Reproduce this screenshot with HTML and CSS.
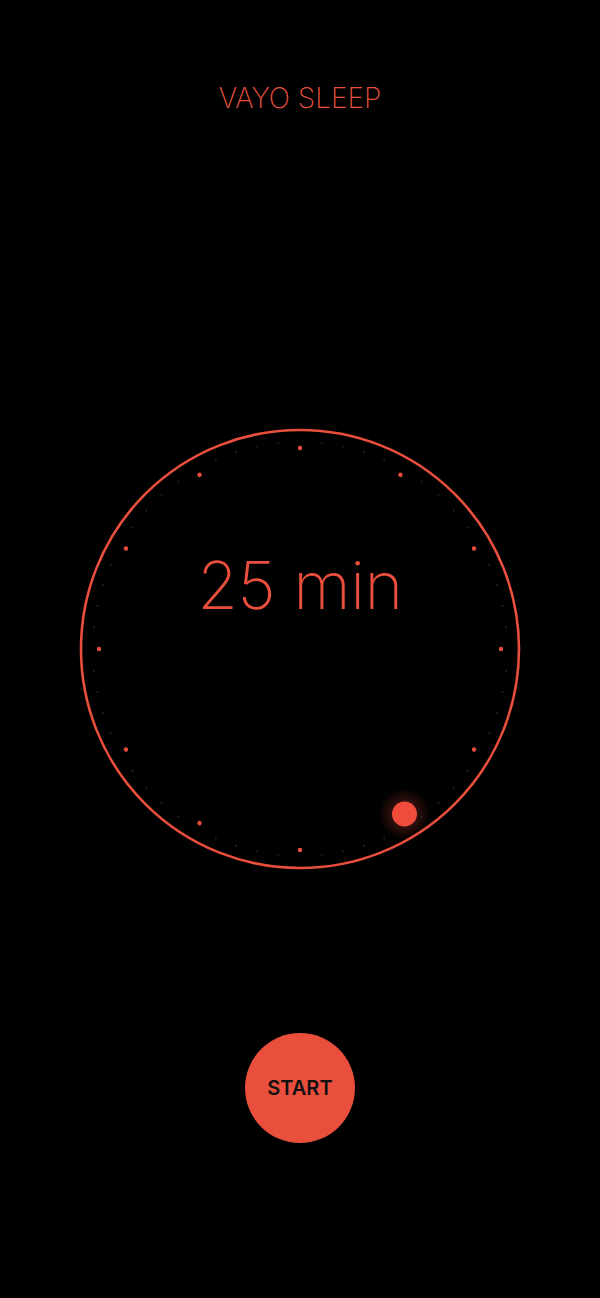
FILE: index.html
```html
<!DOCTYPE html>
<html>
<head>
<meta charset="utf-8">
<link rel="stylesheet" href="styles.css">
</head>
<body>
<div class="app">
  <header class="title">VAYO SLEEP</header>
  <div class="dial">
    <svg class="dial-svg" width="460" height="460" viewBox="0 0 460 460">
      <defs>
        <radialGradient id="glow">
          <stop offset="0" stop-color="#ff5a44" stop-opacity="0.55"/>
          <stop offset="0.5" stop-color="#ff5a44" stop-opacity="0.18"/>
          <stop offset="1" stop-color="#ff5a44" stop-opacity="0"/>
        </radialGradient>
      </defs>
      <circle cx="230" cy="230" r="219" fill="none" stroke="#ea4f3e" stroke-width="2.6"/>
      <g class="minor" fill="#242424">
        <circle cx="230" cy="23" r="1" transform="rotate(6 230 230)"/>
        <circle cx="230" cy="23" r="1" transform="rotate(12 230 230)"/>
        <circle cx="230" cy="23" r="1" transform="rotate(18 230 230)"/>
        <circle cx="230" cy="23" r="1" transform="rotate(24 230 230)"/>
        <circle cx="230" cy="23" r="1" transform="rotate(36 230 230)"/>
        <circle cx="230" cy="23" r="1" transform="rotate(42 230 230)"/>
        <circle cx="230" cy="23" r="1" transform="rotate(48 230 230)"/>
        <circle cx="230" cy="23" r="1" transform="rotate(54 230 230)"/>
        <circle cx="230" cy="23" r="1" transform="rotate(66 230 230)"/>
        <circle cx="230" cy="23" r="1" transform="rotate(72 230 230)"/>
        <circle cx="230" cy="23" r="1" transform="rotate(78 230 230)"/>
        <circle cx="230" cy="23" r="1" transform="rotate(84 230 230)"/>
        <circle cx="230" cy="23" r="1" transform="rotate(96 230 230)"/>
        <circle cx="230" cy="23" r="1" transform="rotate(102 230 230)"/>
        <circle cx="230" cy="23" r="1" transform="rotate(108 230 230)"/>
        <circle cx="230" cy="23" r="1" transform="rotate(114 230 230)"/>
        <circle cx="230" cy="23" r="1" transform="rotate(126 230 230)"/>
        <circle cx="230" cy="23" r="1" transform="rotate(132 230 230)"/>
        <circle cx="230" cy="23" r="1" transform="rotate(138 230 230)"/>
        <circle cx="230" cy="23" r="1" transform="rotate(144 230 230)"/>
        <circle cx="230" cy="23" r="1" transform="rotate(156 230 230)"/>
        <circle cx="230" cy="23" r="1" transform="rotate(162 230 230)"/>
        <circle cx="230" cy="23" r="1" transform="rotate(168 230 230)"/>
        <circle cx="230" cy="23" r="1" transform="rotate(174 230 230)"/>
        <circle cx="230" cy="23" r="1" transform="rotate(186 230 230)"/>
        <circle cx="230" cy="23" r="1" transform="rotate(192 230 230)"/>
        <circle cx="230" cy="23" r="1" transform="rotate(198 230 230)"/>
        <circle cx="230" cy="23" r="1" transform="rotate(204 230 230)"/>
        <circle cx="230" cy="23" r="1" transform="rotate(216 230 230)"/>
        <circle cx="230" cy="23" r="1" transform="rotate(222 230 230)"/>
        <circle cx="230" cy="23" r="1" transform="rotate(228 230 230)"/>
        <circle cx="230" cy="23" r="1" transform="rotate(234 230 230)"/>
        <circle cx="230" cy="23" r="1" transform="rotate(246 230 230)"/>
        <circle cx="230" cy="23" r="1" transform="rotate(252 230 230)"/>
        <circle cx="230" cy="23" r="1" transform="rotate(258 230 230)"/>
        <circle cx="230" cy="23" r="1" transform="rotate(264 230 230)"/>
        <circle cx="230" cy="23" r="1" transform="rotate(276 230 230)"/>
        <circle cx="230" cy="23" r="1" transform="rotate(282 230 230)"/>
        <circle cx="230" cy="23" r="1" transform="rotate(288 230 230)"/>
        <circle cx="230" cy="23" r="1" transform="rotate(294 230 230)"/>
        <circle cx="230" cy="23" r="1" transform="rotate(306 230 230)"/>
        <circle cx="230" cy="23" r="1" transform="rotate(312 230 230)"/>
        <circle cx="230" cy="23" r="1" transform="rotate(318 230 230)"/>
        <circle cx="230" cy="23" r="1" transform="rotate(324 230 230)"/>
        <circle cx="230" cy="23" r="1" transform="rotate(336 230 230)"/>
        <circle cx="230" cy="23" r="1" transform="rotate(342 230 230)"/>
        <circle cx="230" cy="23" r="1" transform="rotate(348 230 230)"/>
        <circle cx="230" cy="23" r="1" transform="rotate(354 230 230)"/>
      </g>
      <g class="major" fill="#ea4f3e">
        <circle cx="230" cy="29" r="2.2"/>
        <circle cx="230" cy="29" r="2.2" transform="rotate(30 230 230)"/>
        <circle cx="230" cy="29" r="2.2" transform="rotate(60 230 230)"/>
        <circle cx="230" cy="29" r="2.2" transform="rotate(90 230 230)"/>
        <circle cx="230" cy="29" r="2.2" transform="rotate(120 230 230)"/>
        <circle cx="230" cy="29" r="2.2" transform="rotate(150 230 230)"/>
        <circle cx="230" cy="29" r="2.2" transform="rotate(180 230 230)"/>
        <circle cx="230" cy="29" r="2.2" transform="rotate(210 230 230)"/>
        <circle cx="230" cy="29" r="2.2" transform="rotate(240 230 230)"/>
        <circle cx="230" cy="29" r="2.2" transform="rotate(270 230 230)"/>
        <circle cx="230" cy="29" r="2.2" transform="rotate(300 230 230)"/>
        <circle cx="230" cy="29" r="2.2" transform="rotate(330 230 230)"/>
      </g>
      <circle cx="334.5" cy="395" r="26" fill="url(#glow)"/>
      <circle cx="334.5" cy="395" r="12.5" fill="#f04c3c"/>
    </svg>
    <div class="readout">25 min</div>
  </div>
  <div class="actions">
    <button class="start">START</button>
  </div>
</div>
</body>
</html>
```

FILE: styles.css
```css
html, body {
  margin: 0;
  padding: 0;
  background: #000;
}
body {
  width: 600px;
  height: 1298px;
  overflow: hidden;
  font-family: Inter, "Liberation Sans", sans-serif;
}
.app {
  display: flex;
  flex-direction: column;
  align-items: center;
}
.title {
  margin-top: 80px;
  font-size: 28px;
  font-weight: 200;
  line-height: 36px;
  color: #e8503f;
}
.dial {
  margin-top: 303px;
  display: grid;
  width: 460px;
  height: 460px;
}
.dial-svg {
  grid-area: 1 / 1;
  display: block;
}
.readout {
  grid-area: 1 / 1;
  justify-self: center;
  align-self: start;
  margin-top: 126px;
  font-size: 66px;
  font-weight: 200;
  line-height: 80px;
  color: #ea4f3e;
  letter-spacing: -0.5px;
}
.actions {
  margin-top: 154px;
}
.start {
  width: 110px;
  height: 110px;
  border-radius: 50%;
  border: none;
  background: #ea4f3e;
  color: #111;
  font-family: Inter, "Liberation Sans", sans-serif;
  font-size: 20px;
  font-weight: 600;
  padding: 0;
}
```
